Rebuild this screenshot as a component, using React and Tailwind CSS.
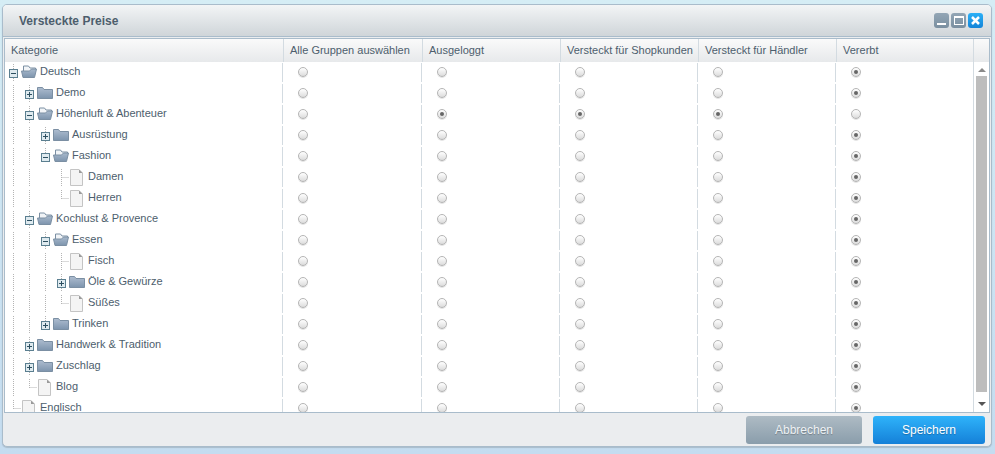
import React from 'react';

const tree = [
  {
    name: 'Deutsch',
    open: true,
    kids: [
      { name: 'Demo', closed: true },
      {
        name: 'Höhenluft & Abenteuer',
        open: true,
        pick: 1,
        kids: [
          { name: 'Ausrüstung', closed: true },
          { name: 'Fashion', open: true, kids: [{ name: 'Damen' }, { name: 'Herren' }] },
        ],
      },
      {
        name: 'Kochlust & Provence',
        open: true,
        kids: [
          {
            name: 'Essen',
            open: true,
            kids: [{ name: 'Fisch' }, { name: 'Öle & Gewürze', closed: true }, { name: 'Süßes' }],
          },
          { name: 'Trinken', closed: true },
        ],
      },
      { name: 'Handwerk & Tradition', closed: true },
      { name: 'Zuschlag', closed: true },
      { name: 'Blog' },
    ],
  },
  { name: 'Englisch' },
];

const columns = [
  { label: 'Alle Gruppen auswählen', width: 'w-[139px]' },
  { label: 'Ausgeloggt', width: 'w-[138px]' },
  { label: 'Versteckt für Shopkunden', width: 'w-[138px]' },
  { label: 'Versteckt für Händler', width: 'w-[138px]' },
  { label: 'Vererbt', width: 'w-[137px]' },
];

function flatten(nodes, guides = []) {
  const rows = [];
  nodes.forEach((node, i) => {
    const last = i === nodes.length - 1;
    rows.push({ ...node, guides, last });
    if (node.kids) rows.push(...flatten(node.kids, [...guides, !last]));
  });
  return rows;
}

function Guide({ on }) {
  return (
    <svg width="16" height="21" className="shrink-0">
      {on && <line x1="8.5" y1="0" x2="8.5" y2="21" stroke="#b4b4b4" strokeDasharray="1 1" />}
    </svg>
  );
}

function Toggle({ row }) {
  const hasToggle = row.open || row.closed;
  return (
    <svg width="16" height="21" className="shrink-0">
      <line x1="8.5" y1="0" x2="8.5" y2={row.last ? 11 : 21} stroke="#b4b4b4" strokeDasharray="1 1" />
      {hasToggle ? (
        <g>
          <rect x="4.5" y="7.5" width="8" height="8" fill="#dfeaef" stroke="#5b7f90" />
          <line x1="6" y1="11.5" x2="11" y2="11.5" stroke="#2d4f60" />
          {row.closed && <line x1="8.5" y1="9" x2="8.5" y2="14" stroke="#2d4f60" />}
        </g>
      ) : (
        <line x1="8.5" y1="10.5" x2="16" y2="10.5" stroke="#b4b4b4" strokeDasharray="1 1" />
      )}
    </svg>
  );
}

function FolderClosed() {
  return (
    <svg width="16" height="21" className="shrink-0">
      <defs>
        <linearGradient id="fc" x1="0" y1="0" x2="0" y2="1">
          <stop offset="0" stopColor="#aebdd0" />
          <stop offset="1" stopColor="#7d94ad" />
        </linearGradient>
      </defs>
      <path d="M0.5 4.5h5l1.500 2h8.500v9h-15z" fill="url(#fc)" stroke="#7b8fa3" />
    </svg>
  );
}

function FolderOpen() {
  return (
    <svg width="16" height="21" className="shrink-0">
      <defs>
        <linearGradient id="fo" x1="0" y1="0" x2="0" y2="1">
          <stop offset="0" stopColor="#a8b9cc" />
          <stop offset="1" stopColor="#7d94ad" />
        </linearGradient>
      </defs>
      <path d="M2.500 9v-5h5l1.500 2h5.500v2" fill="#f1f4f7" stroke="#7b8fa3" />
      <path d="M0.500 9h8l2-2h5l-2 8.500h-11.500z" fill="url(#fo)" stroke="#7b8fa3" />
    </svg>
  );
}

function Page() {
  return (
    <svg width="16" height="21" className="shrink-0">
      <path d="M1.500 2.500h8.500l3.500 3.500v12.500h-12z" fill="#f4f4f4" stroke="#c4c4c4" />
      <path d="M10 2.500v3.500h3.500z" fill="#9a9a9a" />
    </svg>
  );
}

function Radio({ checked }) {
  return (
    <span className="mb-[2px] flex h-[10px] w-[10px] items-center justify-center rounded-full border border-[#b5b5b5] bg-gradient-to-b from-[#fff] to-[#dcdcdc] shadow-[0_1px_0_#e4e4e4]">
      {checked && <span className="h-[4px] w-[4px] rounded-full bg-[#666]" />}
    </span>
  );
}

function WindowButton({ blue, children }) {
  return (
    <span
      className={`flex h-[15px] w-[15px] items-center justify-center rounded-[3px] ${
        blue ? 'bg-gradient-to-b from-[#2bb0f6] to-[#1384d8]' : 'bg-gradient-to-b from-[#93a6b5] to-[#7a8fa0]'
      }`}
    >
      {children}
    </span>
  );
}

function Row({ row }) {
  const hasFolder = row.open || row.closed;
  const inherited = !row.pick;
  return (
    <div className="flex h-[21px] shrink-0">
      <div className="my-px flex w-[278px] shrink-0 items-center overflow-hidden border-r border-[#d3dbe1]">
        <div className="-my-px flex">
          {row.guides.map((on, i) => (
            <Guide key={i} on={on} />
          ))}
          <Toggle row={row} />
          {row.open ? <FolderOpen /> : hasFolder ? <FolderClosed /> : <Page />}
        </div>
        <span className="mb-[3px] ml-[3px] whitespace-nowrap">{row.name}</span>
      </div>
      {columns.map((col, i) => {
        const checked = i === 4 ? inherited : !!row.pick && i > 0;
        return (
          <div
            key={col.label}
            className={`my-px flex shrink-0 items-center pl-[15px] ${col.width} ${i < 4 ? 'border-r border-[#d3dbe1]' : ''}`}
          >
            <Radio checked={checked} />
          </div>
        );
      })}
    </div>
  );
}

export default function App() {
  const rows = flatten(tree);
  return (
    <div className="h-[454px] w-[995px] overflow-hidden bg-gradient-to-b from-[#d5edf5] to-[#c4dcf0] pl-[2px] pt-[4px] font-['Liberation_Sans',sans-serif] text-[11px] text-[#4d5e6d]">
      <div className="flex h-[443px] w-[990px] flex-col rounded-[5px] border border-[#a9bccb] bg-[#ebedef] shadow-[0_1px_1px_#a9bccb]">
        {/* Title */}
        <div className="flex h-[32px] shrink-0 items-center justify-between rounded-t-[4px] border-b border-[#a9bccb] bg-gradient-to-b from-[#f3f5f6] to-[#cfd5d9] pl-[16px] pr-[8px]">
          <span className="text-[12px] font-bold text-[#4d5e6d]">Versteckte Preise</span>
          <div className="flex gap-[2px]">
            <WindowButton>
              <span className="mt-[7px] h-[2px] w-[9px] bg-white" />
            </WindowButton>
            <WindowButton>
              <span className="h-[9px] w-[10px] border border-t-2 border-white" />
            </WindowButton>
            <WindowButton blue>
              <svg width="11" height="11" viewBox="0 0 11 11">
                <path d="M2 2l7 7M9 2l-7 7" stroke="#fff" strokeWidth="2.5" />
              </svg>
            </WindowButton>
          </div>
        </div>

        {/* Table */}
        <div className="mx-px mt-[1px] flex h-[375px] shrink-0 flex-col overflow-hidden border border-[#a9bccb] bg-white">
          <div className="flex h-[23px] shrink-0 bg-gradient-to-b from-[#fafafa] to-[#e7e9eb]">
            <div className="flex w-[279px] shrink-0 items-center border-r border-[#d3dbe1] pl-[6px]">Kategorie</div>
            {columns.map((col) => (
              <div
                key={col.label}
                className={`flex shrink-0 items-center whitespace-nowrap border-r border-[#d3dbe1] pl-[6px] ${col.width}`}
              >
                {col.label}
              </div>
            ))}
          </div>
          <div className="flex min-h-0 flex-1">
            <div className="flex min-w-0 flex-1 flex-col overflow-hidden">
              {rows.map((row) => (
                <Row key={row.name} row={row} />
              ))}
            </div>
            <div className="flex w-[16px] shrink-0 flex-col items-center border-l border-[#d3dbe1] bg-white">
              <span className="mt-[6px] h-0 w-0 border-x-[4px] border-b-[4px] border-x-transparent border-b-[#8a8a8a]" />
              <span className="mt-[4px] w-[11px] flex-1 bg-[#bdbdbd]" />
              <span className="mb-[6px] mt-[10px] h-0 w-0 border-x-[4px] border-t-[4px] border-x-transparent border-t-[#555]" />
            </div>
          </div>
        </div>

        {/* Footer */}
        <div className="flex flex-1 items-center justify-end gap-[11px] pr-[6px]">
          <button className="h-[28px] w-[116px] rounded-[3px] bg-gradient-to-b from-[#aebbc4] to-[#8a9dab] text-[12px] text-[#eef2f5] [text-shadow:0_1px_1px_rgba(0,0,0,0.25)]">
            Abbrechen
          </button>
          <button className="h-[28px] w-[112px] rounded-[3px] bg-gradient-to-b from-[#2fb3fa] to-[#1580d8] text-[12px] text-white [text-shadow:0_1px_1px_rgba(0,0,0,0.25)]">
            Speichern
          </button>
        </div>
      </div>
    </div>
  );
}
